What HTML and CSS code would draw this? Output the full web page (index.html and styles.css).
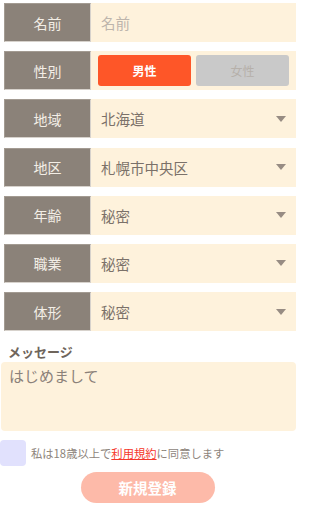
FILE: index.html
```html
<!DOCTYPE html>
<html lang="ja">
<head>
<meta charset="utf-8">
<link rel="stylesheet" href="styles.css">
</head>
<body>
<form class="form">
  <div class="row">
    <div class="label">名前</div>
    <div class="field"><span class="placeholder">名前</span></div>
  </div>
  <div class="row">
    <div class="label">性別</div>
    <div class="field toggle">
      <button type="button" class="btn-sex on">男性</button>
      <button type="button" class="btn-sex off">女性</button>
    </div>
  </div>
  <div class="row">
    <div class="label">地域</div>
    <div class="field select"><span class="value">北海道</span><span class="arrow"></span></div>
  </div>
  <div class="row">
    <div class="label">地区</div>
    <div class="field select"><span class="value">札幌市中央区</span><span class="arrow"></span></div>
  </div>
  <div class="row">
    <div class="label">年齢</div>
    <div class="field select"><span class="value">秘密</span><span class="arrow"></span></div>
  </div>
  <div class="row">
    <div class="label">職業</div>
    <div class="field select"><span class="value">秘密</span><span class="arrow"></span></div>
  </div>
  <div class="row">
    <div class="label">体形</div>
    <div class="field select"><span class="value">秘密</span><span class="arrow"></span></div>
  </div>
  <div class="msg-title">メッセージ</div>
  <div class="message">はじめまして</div>
  <div class="agree">
    <span class="check"></span>
    <span class="agree-text">私は18歳以上で<a class="terms">利用規約</a>に同意します</span>
  </div>
  <div class="submit-wrap"><button type="button" class="submit">新規登録</button></div>
</form>
</body>
</html>
```
FILE: styles.css
```css
html, body {
  margin: 0;
  padding: 0;
  background: #ffffff;
  font-family: "Noto Sans CJK JP", "Noto Sans", sans-serif;
}
.form {
  display: flex;
  flex-direction: column;
  width: 300px;
  box-sizing: border-box;
  padding: 3px 4px 0 1px;
}
.row {
  display: flex;
  height: 39px;
  margin-bottom: 9.2px;
  padding-left: 3px;
}
.label {
  width: 87px;
  flex: none;
  box-sizing: border-box;
  background: #8b8279;
  border: 1px solid #d7d2cc;
  border-top-color: #a39b92;
  border-left-color: #a39b92;
  color: #f3eee6;
  font-size: 14px;
  display: flex;
  align-items: center;
  justify-content: center;
}
.field {
  flex: 1;
  min-width: 0;
  background: #fef2dc;
  display: flex;
  align-items: center;
  padding-left: 10px;
  font-size: 14.5px;
  color: #7b7169;
}
.placeholder {
  color: #bdb5ac;
}
.toggle {
  padding: 4px 7px 4px 7px;
  gap: 5px;
}
.btn-sex {
  flex: 1;
  min-width: 0;
  height: 31px;
  border: none;
  border-radius: 3px;
  font-family: inherit;
  font-size: 12px;
  font-weight: bold;
  padding: 0;
}
.btn-sex.on {
  background: #fe5628;
  color: #ffffff;
}
.btn-sex.off {
  background: #c9c9c9;
  color: #b6b0aa;
  font-weight: normal;
}
.select {
  justify-content: space-between;
  padding-right: 10px;
}
.arrow {
  width: 0;
  height: 0;
  border-left: 5.5px solid transparent;
  border-right: 5.5px solid transparent;
  border-top: 6px solid #978c83;
}
.msg-title {
  font-size: 13px;
  font-weight: bold;
  color: #6f655c;
  padding-left: 7px;
  margin-top: 2px;
  line-height: 20px;
}
.message {
  height: 69px;
  background: #fef2dc;
  border-radius: 4px;
  padding: 3px 8px;
  box-sizing: border-box;
  font-size: 15px;
  color: #8b8179;
  line-height: 22px;
}
.agree {
  display: flex;
  align-items: center;
  margin-top: 9px;
  margin-left: -1px;
  gap: 5px;
}
.check {
  width: 26px;
  height: 26px;
  background: #e1e1fd;
  border-radius: 4px;
  flex: none;
}
.agree-text {
  font-size: 11.3px;
  color: #8d847b;
  white-space: nowrap;
}
.terms {
  color: #f5372b;
  text-decoration: underline;
}
.submit-wrap {
  display: flex;
  justify-content: center;
  margin-top: 6px;
  padding-right: 2px;
}
.submit {
  width: 134px;
  height: 31px;
  border: none;
  border-radius: 16px;
  background: #fdbaa9;
  color: #ffffff;
  font-family: inherit;
  font-size: 14.5px;
  font-weight: bold;
  padding: 0;
}
```
